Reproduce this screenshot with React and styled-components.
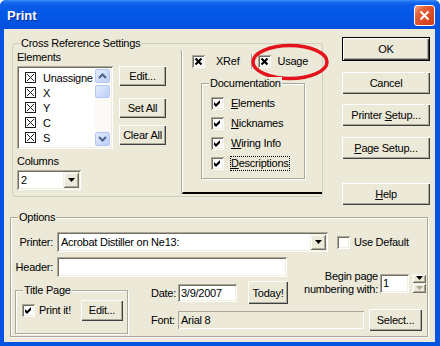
import React from "react";
import styled, { createGlobalStyle, css } from "styled-components";

const FONT = `"Liberation Sans", Arial, Helvetica, sans-serif`;
const FACE = "#ECE9D8";

const Global = createGlobalStyle`
  html, body { margin: 0; padding: 0; background: #fff; }
  body { font-family: ${FONT}; font-size: 11px; color: #000; letter-spacing: -0.25px; }
`;

const sunken = css`
  box-shadow: inset 1px 1px #ACA899, inset -1px -1px #fff, inset 2px 2px #716F64, inset -2px -2px #F1EFE2;
`;
const raised = css`
  box-shadow: inset 1px 1px #F1EFE2, inset -1px -1px #716F64, inset 2px 2px #fff, inset -2px -2px #ACA899;
`;

const Window = styled.div`
  width: 440px; height: 346px; box-sizing: border-box;
  display: flex; flex-direction: column;
  background: #0454E2;
  border-radius: 6px 6px 0 0;
  overflow: hidden;
`;
const TitleBar = styled.div`
  height: 29px; flex: none; box-sizing: border-box;
  display: flex; align-items: center; justify-content: space-between;
  padding: 2px 5px 0 7px;
  background: linear-gradient(180deg, #3D8EF9 0px, #1A6BEF 2px, #0B5CE9 5px, #0558E7 12px, #0454E3 22px, #0350DD 29px);
`;
const TitleText = styled.span`
  font: bold 13px ${FONT}; letter-spacing: 0; color: #fff; text-shadow: 1px 1px 0 #0A2A9A;
`;
const CloseBtn = styled.div`
  width: 21px; height: 21px; box-sizing: border-box;
  border: 1px solid #fff; border-radius: 3px;
  background: linear-gradient(135deg, #F2A283 0%, #E4603A 30%, #D7481F 70%, #C8401A 100%);
  display: flex; align-items: center; justify-content: center;
`;
const Body = styled.div`
  flex: 1; margin: 0 5px 4px 4px; background: ${FACE};
  display: flex; flex-direction: column;
`;
const TopRow = styled.div`
  display: flex; align-items: flex-start; height: 174px; flex: none;
`;
const Group = styled.div`
  position: relative; box-sizing: border-box; flex: none;
  width: ${(p) => p.$w}px; height: ${(p) => p.$h}px;
  margin: ${(p) => p.$m || 0};
  border: 1px solid ${(p) => (p.$round ? "#D0D0BF" : "#ACA899")};
  border-radius: ${(p) => (p.$round ? 3 : 0)}px;
  box-shadow: ${(p) => (p.$round ? "none" : "inset 1px 1px #fff, 1px 1px #fff")};
`;
const Legend = styled.span`
  position: absolute; top: -7px; left: ${(p) => p.$x ?? 7}px;
  padding: 0 1px; background: ${FACE}; line-height: 13px; white-space: nowrap;
`;
const CrossInner = styled.div`
  display: flex; align-items: flex-start;
`;
const LeftCol = styled.div`
  display: flex; flex-direction: column; align-items: flex-start; padding: 7px 0 0 4px;
`;
const FieldLabel = styled.div`
  line-height: 13px; height: 13px; margin-top: ${(p) => p.$mt || 0}px; white-space: nowrap;
`;
const ListRow = styled.div`
  display: flex; align-items: flex-start; margin-top: 2px;
`;
const ListBox = styled.div`
  box-sizing: border-box; width: 96px; height: 83px; padding: 2px; background: #fff;
  ${sunken}; display: flex;
`;
const Items = styled.div`
  flex: 1; padding-top: 2px; overflow: hidden;
`;
const Item = styled.div`
  height: 15px; display: flex; align-items: center; padding-left: 6px; gap: 7px; white-space: nowrap;
`;
const ScrollBar = styled.div`
  width: 16px; flex: none; display: flex; flex-direction: column; box-sizing: border-box;
  background: #FBFAF6; padding: 1px 1px 1px 0;
`;
const ScrollBtn = styled.div`
  height: ${(p) => p.$h || 14}px; margin-top: ${(p) => p.$mt || 0}px; box-sizing: border-box;
  border: 1px solid #B4C8F4; border-radius: 2px;
  background: linear-gradient(135deg, #E3EBFE, #BCCEF9);
  display: flex; align-items: center; justify-content: center;
`;
const Spacer = styled.div`flex: 1;`;
const SideBtns = styled.div`
  display: flex; flex-direction: column; margin-left: 6px;
`;
const Btn = styled.div`
  box-sizing: border-box; flex: none;
  width: ${(p) => p.$w}px; height: ${(p) => p.$h || 22}px;
  margin-top: ${(p) => p.$mt || 0}px; margin-left: ${(p) => p.$ml || 0}px;
  background: ${FACE}; color: #000; white-space: pre;
  border: ${(p) => (p.$def ? "1px solid #000" : "none")};
  box-shadow: inset 1px 1px #fff, inset -1px -1px #404040, inset -2px -2px #ACA899;
  display: flex; align-items: center; justify-content: center;
`;
const Combo = styled.div`
  box-sizing: border-box; flex: none; width: ${(p) => p.$w}px; height: ${(p) => p.$h || 20}px;
  margin-top: ${(p) => p.$mt || 0}px;
  background: #fff; ${sunken}; display: flex; align-items: center; padding: 2px;
`;
const ComboText = styled.div`
  flex: 1; padding-left: 2px; white-space: nowrap; overflow: hidden;
`;
const DropBtn = styled.div`
  width: 16px; align-self: stretch; box-sizing: border-box; background: ${FACE}; ${raised};
  display: flex; align-items: center; justify-content: center;
`;
const Panel = styled.div`
  position: relative; box-sizing: border-box; flex: none;
  width: 140px; height: 144px; margin: 6px 0 0 16px;
  border-left: 1px solid #fff; border-bottom: 2px solid #000;
  box-shadow: -1px 0 0 #ACA899;
`;
const PanelHead = styled.div`
  display: flex; align-items: center; height: 13px; margin-top: 5px; padding-left: 9px;
`;
const HeadLabel = styled.span`
  margin-left: ${(p) => p.$ml}px; line-height: 13px;
`;
const Sep = styled.span`
  width: 2px; height: 15px; margin-left: 12px; border-left: 1px solid #ACA899; border-right: 1px solid #fff; box-sizing: border-box;
`;
const Oval = styled.svg`
  position: absolute; left: 66px; top: -8px; overflow: visible; pointer-events: none;
`;
const DocRows = styled.div`
  padding-top: 9px;
`;
const CheckRow = styled.div`
  height: ${(p) => p.$h || 20}px; display: flex; align-items: center; padding-left: ${(p) => p.$pl ?? 9}px;
`;
const CheckLabel = styled.span`
  margin-left: ${(p) => p.$ml ?? 7}px; line-height: 13px; white-space: nowrap;
  outline: ${(p) => (p.$focus ? "1px dotted #000" : "none")};
`;
const Box = styled.span`
  width: 13px; height: 13px; flex: none; display: inline-flex; background: #fff; ${sunken};
`;
const ButtonColumn = styled.div`
  display: flex; flex-direction: column; margin: 8px 0 0 19px;
`;
const OptionsInner = styled.div`
  display: flex; flex-direction: column; padding-top: 14px;
`;
const Row = styled.div`
  display: flex; align-items: center;
`;
const RightLabel = styled.span`
  width: ${(p) => p.$w}px; text-align: ${(p) => p.$align || "right"}; margin-right: ${(p) => p.$mr ?? 4}px; flex: none; white-space: nowrap;
`;
const Part2 = styled.div`
  display: grid; margin-top: 5px;
  grid-template-columns: 135px 152px 70px 59px;
  grid-template-rows: 23px 25px 29px;
`;
const Cell = styled.div`
  grid-column: ${(p) => p.$col}; grid-row: ${(p) => p.$row};
  display: flex; align-items: center;
  align-self: ${(p) => p.$self || "stretch"};
  justify-content: ${(p) => p.$justify || "flex-start"};
  padding-left: ${(p) => p.$pl || 0}px;
  padding-right: ${(p) => p.$pr || 0}px;
  margin-top: ${(p) => p.$mt || 0}px;
`;
const Field = styled.div`
  box-sizing: border-box; flex: none; width: ${(p) => p.$w}px; height: ${(p) => p.$h}px;
  background: ${(p) => (p.$flat ? FACE : "#fff")};
  ${(p) => (p.$flat ? "box-shadow: inset 1px 1px #ACA899, inset -1px -1px #fff;" : sunken)}
  display: flex; align-items: center; padding-left: 3px; white-space: nowrap;
`;
const TwoLine = styled.div`
  text-align: right; line-height: 13px; margin-right: 2px;
`;
const Spin = styled.div`
  display: flex; flex-direction: column; width: 14px; height: 19px; margin-left: 3px;
`;
const SpinHalf = styled.div`
  flex: 1; background: ${FACE}; ${raised}; display: flex; align-items: center; justify-content: center;
`;
const TitleRow = styled.div`
  display: flex; align-items: center; height: 22px; margin-top: 8px; padding-left: 6px;
`;

const Tri = ({ color = "#000", up }) => (
  <svg width="7" height="4" viewBox="0 0 7 4">
    <polygon points={up ? "0,4 7,4 3.5,0" : "0,0 7,0 3.5,4"} fill={color} />
  </svg>
);
const Chevron = ({ up }) => (
  <svg width="9" height="6" viewBox="0 0 9 6">
    <polyline points={up ? "1,5 4.5,1.5 8,5" : "1,1 4.5,4.5 8,1"} fill="none" stroke="#4D6185" strokeWidth="2" />
  </svg>
);
const ListCheck = () => (
  <svg width="11" height="11" viewBox="0 0 11 11" style={{ flex: "none" }}>
    <rect x="0.5" y="0.5" width="10" height="10" fill="#fff" stroke="#1C1C1C" />
    <path d="M2 2 L9 9 M9 2 L2 9" stroke="#1C1C1C" strokeWidth="1" />
  </svg>
);
const CheckMark = () => (
  <svg width="13" height="13" viewBox="0 0 13 13">
    <polygon points="3,5 5,7 9,3 9,6 5,10 3,8" fill="#000" />
  </svg>
);
const XMark = () => (
  <svg width="13" height="13" viewBox="0 0 13 13">
    <path d="M3.5 3.5 L9.5 9.5 M9.5 3.5 L3.5 9.5" stroke="#000" strokeWidth="2.2" />
  </svg>
);

const elements = ["Unassigne", "X", "Y", "C", "S"];
const docs = [
  ["E", "lements"],
  ["N", "icknames"],
  ["W", "iring Info"],
  ["D", "escriptions"],
];

export default function App() {
  return (
    <>
      <Global />
      <Window>
        <TitleBar>
          <TitleText>Print</TitleText>
          <CloseBtn>
            <svg width="11" height="11" viewBox="0 0 11 11">
              <path d="M1.5 1.5 L9.5 9.5 M9.5 1.5 L1.5 9.5" stroke="#fff" strokeWidth="2" />
            </svg>
          </CloseBtn>
        </TitleBar>
        <Body>
          <TopRow>
            <Group $w={311} $h={154} $m="14px 0 0 8px" $round>
              <Legend $x={7}>Cross Reference Settings</Legend>
              <CrossInner>
                <LeftCol>
                  <FieldLabel>Elements</FieldLabel>
                  <ListRow>
                    <ListBox>
                      <Items>
                        {elements.map((e) => (
                          <Item key={e}>
                            <ListCheck />
                            <span>{e}</span>
                          </Item>
                        ))}
                      </Items>
                      <ScrollBar>
                        <ScrollBtn><Chevron up /></ScrollBtn>
                        <ScrollBtn $mt={2} $h={13} />
                        <Spacer />
                        <ScrollBtn><Chevron /></ScrollBtn>
                      </ScrollBar>
                    </ListBox>
                    <SideBtns>
                      <Btn $w={47} $h={20}>Edit...</Btn>
                      <Btn $w={47} $h={20} $mt={12}>Set All</Btn>
                      <Btn $w={47} $h={20} $mt={7}>Clear All</Btn>
                    </SideBtns>
                  </ListRow>
                  <FieldLabel $mt={6}>Columns</FieldLabel>
                  <Combo $w={64} $mt={2}>
                    <ComboText>2</ComboText>
                    <DropBtn><Tri /></DropBtn>
                  </Combo>
                </LeftCol>
                <Panel>
                  <PanelHead>
                    <Box><XMark /></Box>
                    <HeadLabel $ml={11}>XRef</HeadLabel>
                    <Sep />
                    <Box style={{ marginLeft: 5 }}><XMark /></Box>
                    <HeadLabel $ml={6}>Usage</HeadLabel>
                  </PanelHead>
                  <Oval width="82" height="40">
                    <ellipse cx="41" cy="20" rx="37" ry="16.5" fill="none" stroke="#E3141B" strokeWidth="3.5" />
                  </Oval>
                  <Group $w={104} $h={96} $m="15px 0 0 18px">
                    <Legend $x={7}>Documentation</Legend>
                    <DocRows>
                      {docs.map(([u, rest], i) => (
                        <CheckRow key={u}>
                          <Box><CheckMark /></Box>
                          <CheckLabel $focus={i === 3}>
                            <u>{u}</u>{rest}
                          </CheckLabel>
                        </CheckRow>
                      ))}
                    </DocRows>
                  </Group>
                </Panel>
              </CrossInner>
            </Group>
            <ButtonColumn>
              <Btn $w={88} $h={24} $def>OK</Btn>
              <Btn $w={88} $h={22} $mt={11}>Cancel</Btn>
              <Btn $w={88} $h={22} $mt={10}><span>Printer <u>S</u>etup...</span></Btn>
              <Btn $w={88} $h={22} $mt={11}><span><u>P</u>age Setup...</span></Btn>
              <Btn $w={88} $h={22} $mt={24}><span><u>H</u>elp</span></Btn>
            </ButtonColumn>
          </TopRow>
          <Group $w={418} $h={120} $m="14px 0 0 6px">
            <Legend $x={7}>Options</Legend>
            <OptionsInner>
              <Row>
                <RightLabel $w={42}>Printer:</RightLabel>
                <Combo $w={271}>
                  <ComboText>Acrobat Distiller on Ne13:</ComboText>
                  <DropBtn><Tri /></DropBtn>
                </Combo>
                <Box style={{ marginLeft: 9 }} />
                <CheckLabel $ml={4}>Use Default</CheckLabel>
              </Row>
              <Part2>
                <Cell $col="1 / 3" $row="1" $self="start">
                  <RightLabel $w={42}>Header:</RightLabel>
                  <Field $w={230} $h={20} />
                </Cell>
                <Cell $col="3 / 5" $row="1 / 3" $self="start" $mt={13} $justify="flex-end" $pr={1}>
                  <TwoLine>Begin page<br />numbering with:</TwoLine>
                  <Field $w={29} $h={19}>1</Field>
                  <Spin>
                    <SpinHalf><Tri /></SpinHalf>
                    <SpinHalf><Tri color="#ACA899" /></SpinHalf>
                  </Spin>
                </Cell>
                <Cell $col="1" $row="2 / 4" $self="end">
                  <Group $w={113} $h={44} $m="0 0 0 4px">
                    <Legend $x={7}>Title Page</Legend>
                    <TitleRow>
                      <Box><CheckMark /></Box>
                      <CheckLabel $ml={4}>Print it!</CheckLabel>
                      <Btn $w={42} $h={21} $ml={10}>Edit...</Btn>
                    </TitleRow>
                  </Group>
                </Cell>
                <Cell $col="2" $row="2" $pl={5}>
                  <RightLabel $w={27} $mr={0} $align="left">Date:</RightLabel>
                  <Field $w={59} $h={18}>3/9/2007</Field>
                  <Btn $w={40} $h={23} $ml={11}>Today!</Btn>
                </Cell>
                <Cell $col="2 / 5" $row="3" $pl={5}>
                  <RightLabel $w={27} $mr={0} $align="left">Font:</RightLabel>
                  <Field $w={186} $h={18} $flat>Arial 8</Field>
                  <Btn $w={53} $h={22} $ml={5}>Select...</Btn>
                </Cell>
              </Part2>
            </OptionsInner>
          </Group>
        </Body>
      </Window>
    </>
  );
}
